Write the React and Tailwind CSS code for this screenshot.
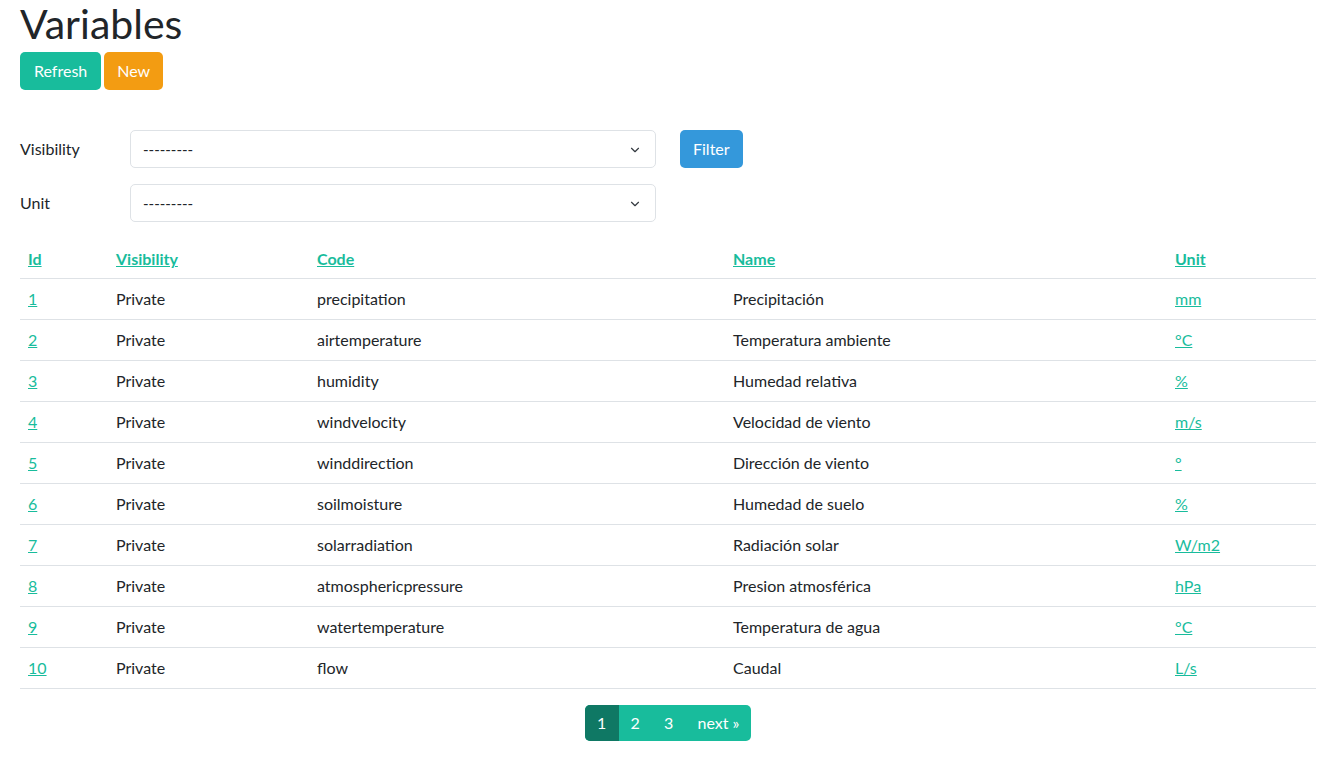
import { ChevronDown } from "lucide-react";

const rows = [
  [1, "precipitation", "Precipitación", "mm"],
  [2, "airtemperature", "Temperatura ambiente", "°C"],
  [3, "humidity", "Humedad relativa", "%"],
  [4, "windvelocity", "Velocidad de viento", "m/s"],
  [5, "winddirection", "Dirección de viento", "°"],
  [6, "soilmoisture", "Humedad de suelo", "%"],
  [7, "solarradiation", "Radiación solar", "W/m2"],
  [8, "atmosphericpressure", "Presion atmosférica", "hPa"],
  [9, "watertemperature", "Temperatura de agua", "°C"],
  [10, "flow", "Caudal", "L/s"],
];

function SelectBox() {
  return (
    <div className="relative w-[526px] h-[38px] border border-[#dee2e6] rounded-[5px] bg-white flex items-center px-3 text-[15px] text-[#212529]">
      <span>---------</span>
      <ChevronDown className="absolute right-[13px] top-[12px] w-[14px] h-[14px] text-[#343a40]" strokeWidth={2} />
    </div>
  );
}

export default function App() {
  return (
    <div className="px-5 w-[1336px] text-[#212529] text-[16px] bg-white min-h-screen" style={{ fontFamily: "Lato, 'Liberation Sans', sans-serif" }}>
      <h1 className="text-[41px] leading-[48px] font-normal">Variables</h1>
      <div className="flex gap-[3px] mt-[4px]">
        <button className="h-[38px] px-[14px] rounded-[5px] bg-[#18bc9c] text-white">Refresh</button>
        <button className="h-[38px] px-[13px] rounded-[5px] bg-[#f39c12] text-white">New</button>
      </div>

      <div className="mt-[40px] flex flex-col gap-[16px]">
        <div className="flex items-center">
          <label className="w-[110px]">Visibility</label>
          <SelectBox />
          <button className="ml-[24px] h-[38px] px-[13px] rounded-[5px] bg-[#3498db] text-white">Filter</button>
        </div>
        <div className="flex items-center">
          <label className="w-[110px]">Unit</label>
          <SelectBox />
        </div>
      </div>

      <table className="mt-[18px] w-[1296px] border-collapse">
        <thead>
          <tr className="border-b border-[#dee2e6] h-[38px] text-left">
            <th className="w-[88px] px-2 font-bold"><a className="text-[#18bc9c] underline">Id</a></th>
            <th className="w-[201px] px-2 font-bold"><a className="text-[#18bc9c] underline">Visibility</a></th>
            <th className="w-[416px] px-2 font-bold"><a className="text-[#18bc9c] underline">Code</a></th>
            <th className="w-[442px] px-2 font-bold"><a className="text-[#18bc9c] underline">Name</a></th>
            <th className="px-2 font-bold"><a className="text-[#18bc9c] underline">Unit</a></th>
          </tr>
        </thead>
        <tbody>
          {rows.map(([id, code, name, unit]) => (
            <tr key={id} className="border-b border-[#dee2e6] h-[41px]">
              <td className="px-2"><a className="text-[#18bc9c] underline">{id}</a></td>
              <td className="px-2">Private</td>
              <td className="px-2">{code}</td>
              <td className="px-2">{name}</td>
              <td className="px-2"><a className="text-[#18bc9c] underline">{unit}</a></td>
            </tr>
          ))}
        </tbody>
      </table>

      <div className="w-[1296px] flex justify-center mt-[16px]">
        <div className="flex h-[36px] rounded-[5px] overflow-hidden bg-[#18bc9c] text-white">
          <span className="w-[34px] flex items-center justify-center bg-[#0f7864]">1</span>
          <span className="w-[33px] flex items-center justify-center">2</span>
          <span className="w-[34px] flex items-center justify-center">3</span>
          <span className="px-[12px] flex items-center justify-center">next »</span>
        </div>
      </div>
    </div>
  );
}
